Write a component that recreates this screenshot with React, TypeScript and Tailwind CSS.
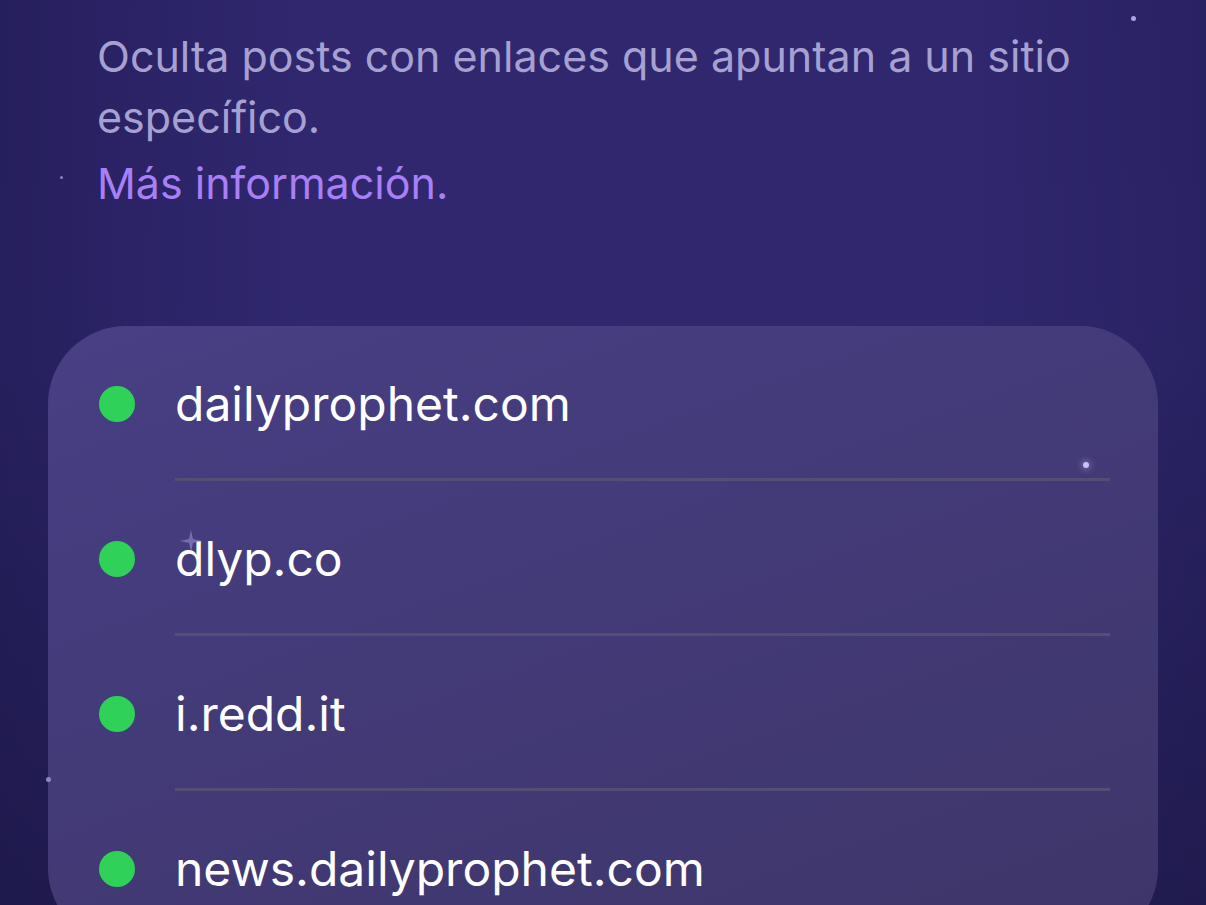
const domains = ["dailyprophet.com", "dlyp.co", "i.redd.it", "news.dailyprophet.com"];

const stars = [
  { cls: "left-[1131px] top-[16px] w-[5px] h-[5px] bg-[#a9a3e6]" },
  { cls: "left-[60px] top-[176px] w-[3px] h-[3px] bg-[#8a84c0]" },
  { cls: "left-[1083px] top-[462px] w-[6px] h-[6px] bg-[#c8c2f5] shadow-[0_0_6px_2px_rgba(200,194,245,0.35)]" },
  { cls: "left-[46px] top-[777px] w-[5px] h-[5px] bg-[#8f89b8]" },
];

export default function App() {
  return (
    <div
      className="relative h-[905px] w-[1206px] overflow-hidden bg-[linear-gradient(180deg,#30276f_0%,#30286f_40%,#2a2362_70%,#241e55_100%)]"
      style={{ fontFamily: "Inter, 'Noto Sans', sans-serif" }}
    >
      <div className="absolute inset-0 bg-[linear-gradient(90deg,rgba(20,16,60,0.35)_0%,rgba(20,16,60,0)_25%,rgba(20,16,60,0)_80%,rgba(20,16,60,0.25)_100%)]" />

      <div className="relative pl-[97px] pr-[60px] pt-[26px]">
        <p className="text-[43px] leading-[61px] text-[#a7a1d1]">
          Oculta posts con enlaces que apuntan a un sitio
          <br />
          específico.
        </p>
        <a href="#" className="mt-[5px] block text-[43px] leading-[61px] text-[#a97ff5]">
          Más información.
        </a>
      </div>

      {/* Domain list */}
      <div className="relative ml-[48px] mt-[112px] w-[1110px] rounded-[78px] bg-[linear-gradient(160deg,#483f85_0%,#433a78_45%,#3e3669_100%)]">
        {domains.map((domain, index) => (
          <div key={domain} className="flex h-[155px] items-center">
            <span className="ml-[51px] h-[36px] w-[36px] shrink-0 rounded-full bg-[#30d158]" />
            <div className="ml-[40px] mr-[48px] flex h-full flex-1 items-center relative">
              <span className="text-[48px] text-white">{domain}</span>
              {index < domains.length - 1 && (
                <div className="absolute bottom-0 left-0 right-0 h-[3px] bg-[#544d74]" />
              )}
            </div>
          </div>
        ))}
      </div>

      {stars.map((s, i) => (
        <span key={i} className={`absolute rounded-full ${s.cls}`} />
      ))}
      <svg className="absolute left-[180px] top-[530px]" width="22" height="22" viewBox="0 0 22 22">
        <path d="M11 0 L13 9 L22 11 L13 13 L11 22 L9 13 L0 11 L9 9 Z" fill="#8a80c8" opacity="0.7" />
      </svg>
    </div>
  );
}
